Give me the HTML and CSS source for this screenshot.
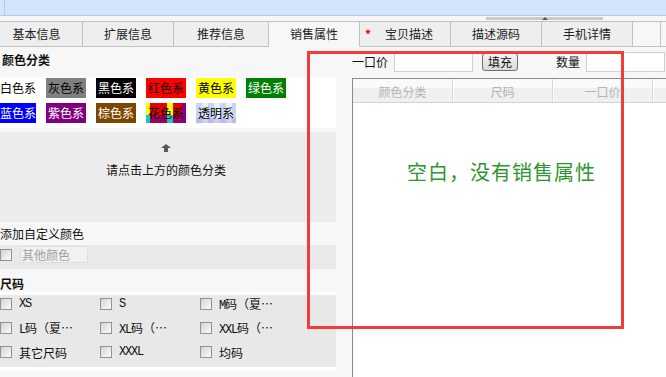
FILE: index.html
```html
<!DOCTYPE html>
<html>
  <head>
    <meta charset="utf-8">
    <title>销售属性</title>
    <link rel="stylesheet" href="styles.css">
  </head>
  <body>
    <div class="topbar"><div class="topbar-inner"></div></div>
    <div class="grip-row"><span class="grip"></span></div>

    <nav class="tabs">
      <span class="tab tab-first">基本信息</span>
      <span class="tab">扩展信息</span>
      <span class="tab tab-wide">推荐信息</span>
      <span class="tab tab-active">销售属性</span>
      <span class="tab tab-required"><i class="star">*</i>宝贝描述</span>
      <span class="tab">描述源码</span>
      <span class="tab">手机详情</span>
      <span class="tab-gap"></span>
      <span class="tab-rest"></span>
    </nav>

    <div class="content">
      <section class="left">
        <h2 class="sec-title sec-title-color">颜色分类</h2>
        <div class="swatches">
          <span class="sw sw-white">白色系</span>
          <span class="sw sw-gray">灰色系</span>
          <span class="sw sw-black">黑色系</span>
          <span class="sw sw-red">红色系</span>
          <span class="sw sw-yellow">黄色系</span>
          <span class="sw sw-green">绿色系</span>
          <span class="sw sw-blue">蓝色系</span>
          <span class="sw sw-purple">紫色系</span>
          <span class="sw sw-brown">棕色系</span>
          <span class="sw sw-flower">花色系</span>
          <span class="sw sw-clear">透明系</span>
        </div>

        <div class="hint">
          <svg width="10" height="8" viewBox="0 0 10 8"><path d="M5 0 L10 4 H7 V8 H3 V4 H0 Z" fill="#5a5a5a"/></svg>
          <p>请点击上方的颜色分类</p>
        </div>

        <h3 class="sub-title">添加自定义颜色</h3>
        <div class="custom-row">
          <span class="cb"></span>
          <span class="custom-input">其他颜色</span>
        </div>

        <h2 class="sec-title sec-title-size">尺码</h2>
        <div class="sizes">
          <div class="size-grid">
            <label class="size"><span class="cb"></span><span class="en">XS</span></label>
            <label class="size"><span class="cb"></span><span class="en">S</span></label>
            <label class="size"><span class="cb"></span><span><span class="en">M</span>码（夏…</span></label>
            <label class="size"><span class="cb"></span><span><span class="en">L</span>码（夏…</span></label>
            <label class="size"><span class="cb"></span><span><span class="en">XL</span>码（…</span></label>
            <label class="size"><span class="cb"></span><span><span class="en">XXL</span>码（…</span></label>
            <label class="size"><span class="cb"></span><span>其它尺码</span></label>
            <label class="size"><span class="cb"></span><span class="en">XXXL</span></label>
            <label class="size"><span class="cb"></span><span>均码</span></label>
          </div>
        </div>
      </section>

      <section class="right">
        <div class="price-row">
          <span class="lbl">一口价</span>
          <input class="field" type="text">
          <button class="fill">填充</button>
          <span class="lbl lbl-qty">数量</span>
          <input class="field" type="text">
        </div>
        <div class="sku-table">
          <div class="sku-head">
            <span>颜色分类</span>
            <span>尺码</span>
            <span>一口价</span>
            <span class="sku-head-rest"></span>
          </div>
          <div class="sku-body">
            <p class="empty">空白，没有销售属性</p>
          </div>
        </div>
      </section>
    </div>

    <div class="mark"></div>
  </body>
</html>
```

FILE: styles.css
```css
* {
  box-sizing: border-box;
}

body {
  margin: 0;
  position: relative;
  height: 377px;
  overflow: hidden;
  font-family: "Noto Sans CJK SC", sans-serif;
  font-size: 12px;
  color: #222;
  background: #f7f7f7;
}

/* top frame */

.topbar {
  height: 16px;
  padding-left: 4px;
  background: #d4e4fc;
  border-bottom: 1px solid #b3cbec;
}

.topbar-inner {
  height: 100%;
  border-left: 1px solid #b3cbec;
}

.grip-row {
  height: 5px;
  padding: 1px 0 0 486px;
}

.grip {
  display: flex;
  justify-content: center;
  align-items: flex-end;
  width: 117px;
  height: 3px;
  background: #cacaca;
}

.grip::after {
  content: "";
  border-left: 3px solid transparent;
  border-right: 3px solid transparent;
  border-bottom: 3px solid #555;
}

/* tabs */

.tabs {
  display: flex;
  height: 26px;
  overflow: hidden;
  border-top: 1px solid #c2c2c2;
}

.tab {
  flex: none;
  width: 91px;
  line-height: 24px;
  text-align: center;
  color: #222;
  background: #eee;
  border-right: 1px solid #c2c2c2;
  border-bottom: 1px solid #c2c2c2;
}

.tab-first {
  width: 83px;
  padding-right: 9px;
}

.tab-wide {
  width: 95px;
}

.tab-active {
  background: #f7f7f7;
  border-bottom-color: #f7f7f7;
}

.tab-required {
  display: flex;
  padding-left: 5px;
}

.star {
  display: inline-block;
  width: 6px;
  margin-right: 14px;
  font-style: normal;
  font-weight: bold;
  color: #e00;
}

.tab-gap {
  flex: none;
  width: 27px;
  border-bottom: 1px solid #c2c2c2;
}

.tab-rest {
  flex: 1;
  border-left: 1px solid #c2c2c2;
  border-bottom: 1px solid #c2c2c2;
}

/* layout */

.content {
  display: flex;
  gap: 16px;
}

.left {
  flex: none;
  width: 336px;
}

.right {
  flex: 1;
  min-width: 0;
  overflow: hidden;
}

/* left: colours and sizes */

.sec-title {
  margin: 0;
  font-size: 12px;
  font-weight: bold;
  color: #111;
}

.sec-title-color {
  height: 30px;
  padding: 4px 0 0 2px;
  line-height: 18px;
}

.sec-title-size {
  height: 23px;
  padding-top: 7px;
  line-height: 16px;
}

.swatches {
  display: grid;
  grid-template-columns: 36px repeat(5, 40px);
  gap: 5px 10px;
  padding: 1px 0 5px;
  background: #fff;
}

.sw {
  height: 20px;
  line-height: 20px;
  text-align: center;
  color: #000;
}

.sw-gray { background: #808080; }
.sw-black { background: #000; color: #fff; }
.sw-red { background: #f00; }
.sw-yellow { background: #ff0; }
.sw-green { background: #008000; color: #fff; }
.sw-blue { background: #00f; color: #fff; }
.sw-purple { background: #800080; color: #fff; }
.sw-brown { background: #7d4700; color: #fff; }

.sw-flower {
  background:
    linear-gradient(90deg, #ff0 0 4px, #e60000 4px 21px, #ff0 21px 27px, #e60000 27px 36px, #850085 36px) top / 100% 60% no-repeat,
    linear-gradient(90deg, #19c8c8 0 4px, #a0005a 4px 21px, #19c8c8 21px 27px, #a0005a 27px 36px, #850085 36px) bottom / 100% 40% no-repeat;
}

.sw-clear {
  background:
    linear-gradient(transparent 75%, rgba(160, 140, 230, 0.35) 75%),
    repeating-linear-gradient(90deg, #c9d6f2 0 6px, #eceef9 6px 12px);
}

.hint {
  height: 90px;
  margin-top: 4px;
  padding: 12px 4px 0 0;
  text-align: center;
  background: #ececec;
}

.hint svg {
  display: block;
  margin: 0 auto;
}

.hint p {
  margin: 10px 0 0;
  line-height: 16px;
  color: #111;
}

.sub-title {
  margin: 0;
  height: 23px;
  font-size: 12px;
  font-weight: normal;
  line-height: 23px;
  color: #111;
}

.custom-row {
  display: flex;
  align-items: flex-start;
  gap: 8px;
  height: 24px;
  padding-top: 1px;
  background: #e9e9e9;
}

.custom-row .cb {
  margin-top: 3px;
}

.custom-input {
  width: 68px;
  height: 17px;
  padding-left: 1px;
  line-height: 15px;
  color: #a0a0a0;
  background: #f1f1f1;
  border: 1px solid #dedede;
}

.cb {
  flex: none;
  width: 12px;
  height: 12px;
  border: 1px solid #929292;
  background: linear-gradient(135deg, #d2d2d2, #fdfdfd);
}

.sizes {
  padding: 3px 0 4px;
  background: #fff;
}

.size-grid {
  display: grid;
  grid-template-columns: repeat(3, 100px);
  grid-auto-rows: 24px;
  background: #e8e8e8;
}

.size {
  display: flex;
  align-items: center;
  gap: 7px;
  height: 18px;
  color: #111;
}

.en {
  font-family: "Liberation Mono", monospace;
  font-size: 12px;
  letter-spacing: -1.2px;
}

/* right: sku table */

.price-row {
  display: flex;
  align-items: flex-start;
  height: 31px;
  padding-top: 5px;
}

.lbl {
  flex: none;
  line-height: 20px;
  color: #111;
}

.lbl-qty {
  margin-left: 38px;
}

.field {
  flex: none;
  width: 79px;
  height: 20px;
  margin: 0 0 0 6px;
  padding: 0 3px;
  font: inherit;
  background: #fff;
  border: 1px solid #cfcfcf;
  outline: none;
}

.fill {
  flex: none;
  width: 36px;
  height: 18px;
  margin: 1px 0 0 9px;
  padding: 0;
  font: inherit;
  line-height: 16px;
  color: #111;
  background: linear-gradient(#f6f6f6, #d9d9d9);
  border: 1px solid #707070;
  border-radius: 3px;
}

.sku-table {
  height: 299px;
  background: #fff;
  border-left: 1px solid #8a8a8a;
}

.sku-head {
  display: flex;
  height: 25px;
  background: linear-gradient(#fafafa 40%, #eef0f1 40%);
  border-top: 1px solid #8a8a8a;
  border-bottom: 1px solid #d2d2d2;
}

.sku-head span {
  flex: none;
  width: 100px;
  padding-top: 3px;
  line-height: 20px;
  text-align: center;
  color: #b4b4b4;
  border-right: 1px solid #d8d8d8;
  box-shadow: 1px 0 0 #fff;
}

.sku-head .sku-head-rest {
  flex: 1;
  border-right: none;
  box-shadow: none;
}

.sku-body {
  padding: 57px 0 0 54px;
}

.empty {
  margin: 0;
  font-size: 20px;
  line-height: 24px;
  letter-spacing: 1px;
  color: #2e962e;
}

/* annotation frame */

.mark {
  position: absolute;
  left: 307px;
  top: 51px;
  width: 317px;
  height: 278px;
  border: 3px solid #f23c3c;
}
```
